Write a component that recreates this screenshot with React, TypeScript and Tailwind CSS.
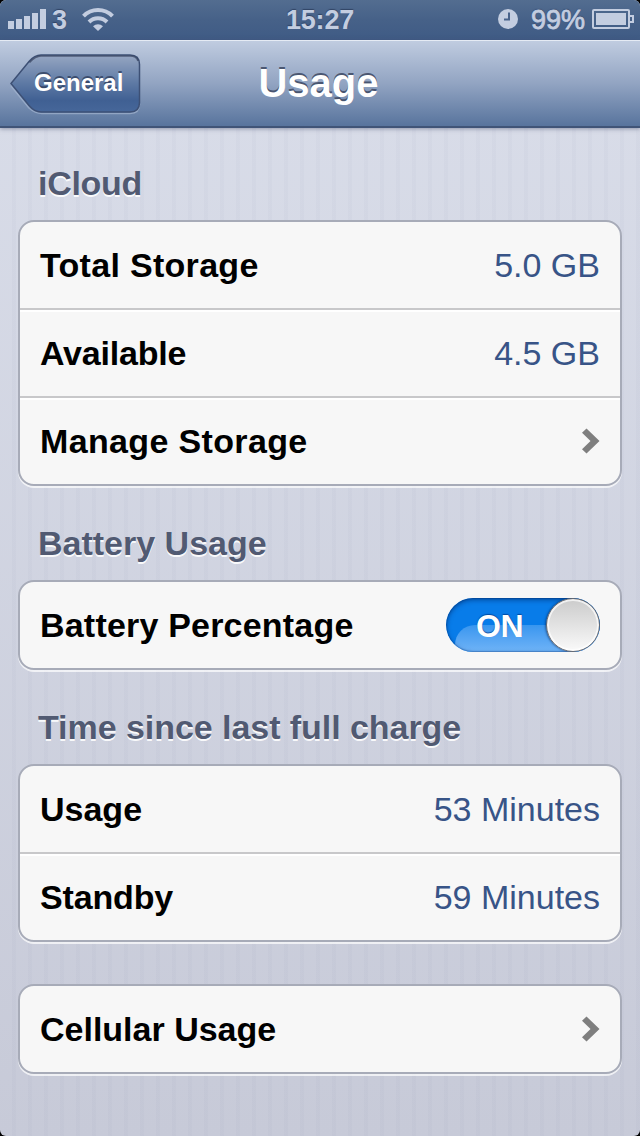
import React, { useState } from 'react'

type Row = {
  label: string
  value?: string
  kind?: 'link' | 'toggle'
  tracking?: string
}

const groups: { title?: string; tracking?: string; rows: Row[] }[] = [
  {
    title: 'iCloud',
    tracking: 'tracking-[-0.3px]',
    rows: [
      { label: 'Total Storage', value: '5.0 GB', tracking: 'tracking-[0.3px]' },
      { label: 'Available', value: '4.5 GB', tracking: 'tracking-[-0.2px]' },
      { label: 'Manage Storage', kind: 'link', tracking: 'tracking-[0.35px]' }
    ]
  },
  {
    title: 'Battery Usage',
    rows: [{ label: 'Battery Percentage', kind: 'toggle', tracking: 'tracking-[0.2px]' }]
  },
  {
    title: 'Time since last full charge',
    tracking: 'tracking-[-0.05px]',
    rows: [
      { label: 'Usage', value: '53 Minutes' },
      { label: 'Standby', value: '59 Minutes', tracking: 'tracking-[-0.15px]' }
    ]
  },
  {
    rows: [{ label: 'Cellular Usage', kind: 'link' }]
  }
]

function StatusBar() {
  return (
    <div className="h-10 grid grid-cols-[1fr_auto_1fr] items-center bg-linear-to-b from-[#536d90] via-[#466188] to-[#3f5b85] text-[27px] leading-10 font-bold text-[#c3cde0] [text-shadow:0_-1px_1px_rgba(30,45,75,0.6)]">
      <div className="flex items-center h-10 pl-2">
        <svg className="w-[38px] h-10" viewBox="0 0 38 40" fill="#c3cde0">
          <rect x="0" y="21" width="6" height="8" />
          <rect x="8" y="19" width="6" height="10" />
          <rect x="16" y="16" width="6" height="13" />
          <rect x="24" y="13" width="6" height="16" />
          <rect x="32" y="9" width="6" height="20" />
        </svg>
        <span className="ml-1.5">3</span>
        <svg className="w-8 h-10 ml-[15px]" viewBox="0 0 32 40" fill="none" stroke="#c3cde0" strokeWidth="4">
          <path d="M1.5 16.2A20.3 20.3 0 0 1 30.5 16.2" />
          <path d="M7 22A12.7 12.7 0 0 1 25 22" />
          <path d="M16 31L11 26.2A7.2 7.2 0 0 1 21 26.2Z" fill="#c3cde0" stroke="none" />
        </svg>
      </div>
      <span className="tracking-[-0.2px]">15:27</span>
      <div className="flex items-center justify-end h-10 pr-[6px]">
        <svg className="w-5 h-10" viewBox="0 0 20 40">
          <circle cx="10" cy="19" r="10" fill="#c3cde0" />
          <path d="M11 12.5V19.5H6" fill="none" stroke="#48628a" strokeWidth="2" />
        </svg>
        <span className="ml-[13px] font-normal [-webkit-text-stroke:0.8px_#c3cde0]">99%</span>
        <svg className="w-[42px] h-10 ml-[7px]" viewBox="0 0 42 40">
          <rect x="1" y="10" width="36" height="18" rx="1" fill="none" stroke="#c3cde0" strokeWidth="2" />
          <rect x="4" y="13" width="30" height="12" fill="#c3cde0" />
          <path d="M38 16H41V22H38" fill="none" stroke="#c3cde0" strokeWidth="2" />
        </svg>
      </div>
    </div>
  )
}

function BackButton() {
  return (
    <button className="relative w-[132px] h-[62px] ml-[9px] mt-px pl-[25px] pb-[2px] text-left text-2xl font-bold text-white [text-shadow:0_-2px_0_rgba(45,60,90,0.75)]">
      <svg className="absolute inset-0 w-[132px] h-[62px]" viewBox="0 0 132 62" fill="none">
        <defs>
          <linearGradient id="back" x1="0" y1="0" x2="0" y2="1">
            <stop offset="0" stopColor="#96a6c2" />
            <stop offset="0.5" stopColor="#5d79a4" />
            <stop offset="0.8" stopColor="#406093" />
            <stop offset="1" stopColor="#46679a" />
          </linearGradient>
        </defs>
        <path d="M2 33L20 55Q26 60.5 33 60.500H121Q130.500 60.500 130.500 51" stroke="#a3b4cf" strokeOpacity="0.7" strokeWidth="1.500" />
        <path d="M2 30.500L20 8.500Q25.500 2 32 2H121Q130.500 2 130.500 11.500V49.500Q130.500 59 121 59H32Q25.500 59 20 52.500Z" fill="url(#back)" stroke="#3d5075" strokeWidth="1.500" />
        <path d="M20.500 9.500Q26.500 3 32 3H121Q127.500 3 129 8" stroke="#36425c" strokeOpacity="0.7" strokeWidth="1.500" />
      </svg>
      <span className="relative">General</span>
    </button>
  )
}

function NavBar() {
  return (
    <header className="relative h-[88px] grid grid-cols-[1fr_auto_1fr] items-center border-t border-t-[#e5ebf4] border-b-2 border-b-[#405477] bg-linear-to-b from-[#c0cce0] via-[#92a4c2] to-[#58749d] shadow-[0_1px_4px_rgba(70,80,110,0.5)]">
      <BackButton />
      <h1 className="mr-[3px] pb-[2px] text-[40px] leading-[48px] font-bold text-white [text-shadow:0_-2px_0_rgba(60,72,98,0.85)]">Usage</h1>
    </header>
  )
}

function Toggle() {
  const [on, setOn] = useState(true)

  return (
    <button
      role="switch"
      aria-checked={on}
      aria-label="Battery Percentage"
      onClick={() => setOn(!on)}
      className={`relative w-[154px] h-[54px] rounded-full overflow-hidden ${on ? 'bg-[#087ce9]' : 'bg-gray-200'}`}
    >
      {on && (
        <>
          <span className="absolute left-[9px] right-0 top-[27px] h-[36px] rounded-tl-[20px] bg-linear-to-b from-[#3896ef] to-[#7fbdf9]" />
          <span className="absolute left-[30px] top-0 text-[32px] leading-[56px] font-bold tracking-[-0.5px] text-white [text-shadow:0_-1px_1px_rgba(0,60,140,0.8)]">ON</span>
        </>
      )}
      <span className="absolute inset-0 rounded-full shadow-[inset_0_2px_5px_rgba(0,45,110,0.65),inset_0_0_1px_1px_rgba(0,50,120,0.3)]" />
      <span className={`absolute top-0 size-[54px] rounded-full border-[1.5px] border-[#6b6b6f] bg-linear-to-b from-[#cbcbcb] to-[#fafafa] shadow-[inset_0_0_0_2px_rgba(255,255,255,0.7),-1px_0_2px_rgba(0,30,80,0.5)] ${on ? 'right-0' : 'left-0'}`} />
    </button>
  )
}

function Chevron() {
  return (
    <svg className="w-[18px] h-[26px]" viewBox="0 0 18 26" fill="#7f7f7f">
      <path d="M4.500 0.500L17.500 13L4.500 25.500L0 21.300L8.500 13L0 4.700Z" />
    </svg>
  )
}

export default function App() {
  return (
    <div className="w-[640px] h-[1136px] bg-black overflow-hidden font-['Liberation_Sans',Arial,sans-serif]">
      <div className="h-full rounded-[6px] overflow-hidden bg-linear-to-b from-[#dadeea] to-[#c7cad8]">
        <StatusBar />
        <NavBar />

        <main className="h-[1008px] px-[18px] pt-[35px] bg-[repeating-linear-gradient(90deg,transparent_0_12px,rgba(90,100,140,0.03)_12px_16px)]">
          {groups.map((group, i) => (
            <section key={i} className={group.title ? 'mb-[37px]' : 'mt-[42px]'}>
              {group.title && (
                <h2 className={`pl-5 mb-[17px] text-[34px] leading-10 font-bold text-[#515a72] [text-shadow:0_2px_0_rgba(255,255,255,0.9)] ${group.tracking ?? ''}`}>
                  {group.title}
                </h2>
              )}
              <ul className="rounded-[16px] border-2 border-[#a7abb8] bg-[#f7f7f7] shadow-[0_2px_0_rgba(255,255,255,0.7)]">
                {group.rows.map((row, j) => (
                  <li
                    key={row.label}
                    className={`flex items-center justify-between px-5 text-[34px] ${j > 0 ? 'h-[88px] border-t-2 border-[#c8c8ca] shadow-[inset_0_2px_0_#fff]' : 'h-[86px]'}`}
                  >
                    <span className={`font-bold text-black ${row.tracking ?? ''}`}>{row.label}</span>
                    {row.value && <span className="text-[#385487]">{row.value}</span>}
                    {row.kind === 'link' && <Chevron />}
                    {row.kind === 'toggle' && <Toggle />}
                  </li>
                ))}
              </ul>
            </section>
          ))}
        </main>
      </div>
    </div>
  )
}
